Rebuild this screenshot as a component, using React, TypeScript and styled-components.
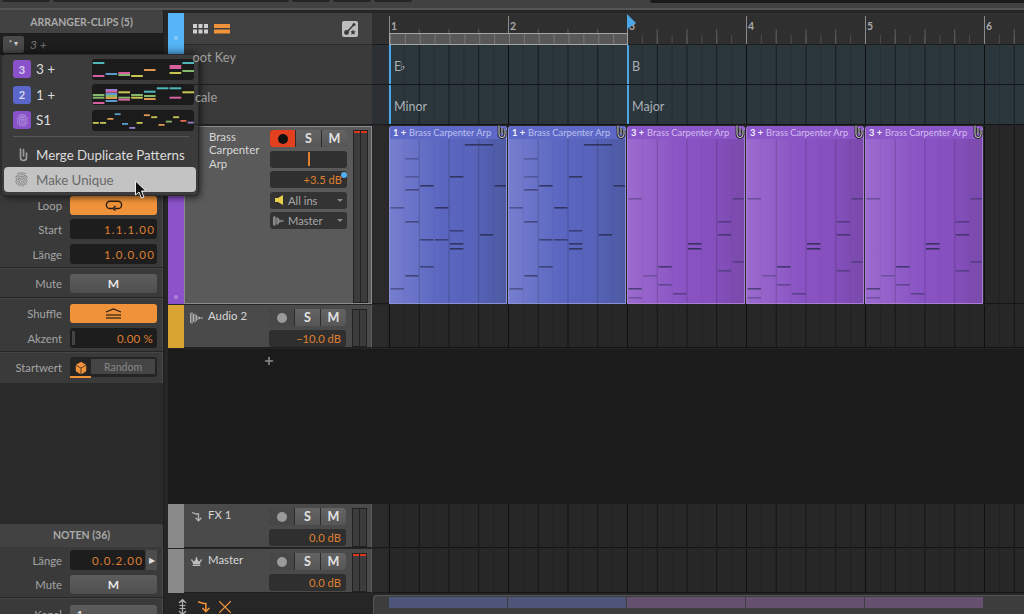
import React from 'react';
import styled, { createGlobalStyle } from 'styled-components';
import { FaCrown, FaDiceD6 } from 'react-icons/fa';
import { MdFingerprint } from 'react-icons/md';
import { Plus, X } from 'lucide-react';

const GlobalStyle = createGlobalStyle`
    html, body {
        margin: 0;
        padding: 0;
        background: #262626;
    }
    * {
        box-sizing: border-box;
    }
`;

const ORANGE = '#f0923a';
const VALUE = '#df7f30';
const BAR = 119;
const STEP = BAR / 8;

/* ---------- data ---------- */

type Note = [number, number, number, number?];

const blueNotes: Note[] = [
    [5, 2, 18], [1, 1, 32, 0.45], [1, 1, 50, 0.45], [2, 1, 59], [4, 1, 50], [7, 1, 59], [1, 1, 63, 0.7],
    [0, 1, 81, 0.6], [3, 1, 81], [1, 1, 95, 0.7], [4, 1, 104, 0.8], [6, 1, 108], [2, 1, 113, 0.8],
    [3, 1, 113, 0.8], [4, 1, 117], [4, 1, 122], [2, 1, 140, 0.8], [1, 1, 149, 0.8], [0, 1, 162, 0.6],
];

const purpleNotes: Note[] = [
    [0, 1, 72, 0.45], [6, 1, 95, 0.6], [6, 1, 108, 0.8], [4, 1, 117], [4, 1, 122], [7, 1, 72, 0.55],
    [7, 1, 135, 0.55], [2, 1, 140, 0.9], [1, 1, 149, 0.4], [2, 1, 158, 0.55], [6, 1, 144, 0.55],
    [3, 1, 167, 0.6], [0, 1, 162, 0.8], [0, 1, 171, 0.45],
];

const C = {
    teal: '#4fb7b8',
    pink: '#d65f9e',
    yellow: '#c8c650',
    green: '#86b86c',
    blue: '#5a9ccb',
    orange: '#dc9850',
    lav: '#9a7fd0',
    red: '#d9694f',
};

type Mini = [number, number, string];

const preview3: Mini[] = [
    [0, 3, C.teal], [0, 16, C.pink], [1, 14, C.blue], [2, 13, C.pink], [2, 15, C.green], [3, 16, C.yellow],
    [4, 10, C.orange], [6, 6, C.pink], [6, 8, C.pink], [6, 13, C.yellow], [7, 3, C.teal], [7, 11, C.green],
];

const preview2: Mini[] = [
    [0, 10, C.green], [0, 12.7, C.green], [0, 18, C.pink], [1, 5, C.lav], [1, 6.7, C.pink], [1, 9, C.blue],
    [1, 11, C.green], [1, 13, C.orange], [1, 16, C.blue], [2, 7.3, C.yellow], [2, 12.7, C.green], [2, 14.7, C.pink],
    [3, 10, C.green], [3, 12.7, C.yellow], [4, 6.7, C.teal], [4, 11, C.green], [4, 14, C.orange], [5, 3.3, C.teal],
    [6, 3.3, C.teal], [6, 12.7, C.pink], [7, 7.3, C.yellow],
];

const preview1: Mini[] = [
    [0, 12, C.yellow], [1, 12, C.yellow], [2, 8, C.orange], [3, 3.3, C.blue], [4, 13, C.blue], [5, 17, C.lav],
    [6, 12, C.yellow], [7, 4.3, C.orange], [8, 6.3, C.yellow], [9, 14, C.orange], [10, 10.7, C.green],
    [11, 6.3, C.yellow], [12, 10, C.red], [13, 11.7, C.lav],
];

/* ---------- page ---------- */

const Page = styled.div`
    position: relative;
    display: flex;
    flex-direction: column;
    width: 1024px;
    height: 614px;
    overflow: hidden;
    background: #262626;
    font-family: Lato, 'Liberation Sans', sans-serif;
    color: #bbb;
`;

const TopStrip = styled.div`
    display: flex;
    justify-content: space-between;
    height: 10px;
    flex: none;
    background: #414141;
    border-bottom: 2px solid #555;
`;

const TopSlots = styled.div`
    display: flex;
    gap: 3px;
    padding-left: 2px;
`;

const TopSlot = styled.div<{ $w: number }>`
    width: ${({ $w }) => $w}px;
    height: 2px;
    background: #262626;
    border-radius: 0 0 2px 2px;
`;

const TopDisplay = styled.div`
    width: 374px;
    height: 3px;
    background: #1b1b1b;
    border-radius: 0 0 0 4px;
`;

const Main = styled.div`
    display: flex;
    flex: 1;
    min-height: 0;
`;

/* ---------- left inspector ---------- */

const Side = styled.aside`
    display: flex;
    flex-direction: column;
    justify-content: space-between;
    width: 164px;
    flex: none;
    background: #2a2a2a;
    border-right: 1px solid #1d1d1d;
`;

const Panel = styled.section<{ $h: number }>`
    display: flex;
    flex-direction: column;
    height: ${({ $h }) => $h}px;
    width: 163px;
    background: #3a3a3a;
    border-radius: 0 4px 0 0;
    box-shadow: inset -1px 0 0 #4a4a4a;
`;

const PanelTitle = styled.h2<{ $lh?: number }>`
    height: 23px;
    margin: 0;
    flex: none;
    font-size: 10.5px;
    font-weight: 700;
    line-height: ${({ $lh = 23 }) => $lh}px;
    text-align: center;
    color: #a9a9a9;
    background: #424242;
    border-radius: 0 4px 0 0;
`;

const ClipPicker = styled.div`
    display: flex;
    align-items: center;
    gap: 6px;
    height: 22px;
    flex: none;
    padding-left: 3px;
    background: #1e1e1e;
    font-size: 12px;
    font-style: italic;
    color: #777;
`;

const PickerButton = styled.div`
    width: 21px;
    height: 17px;
    border-radius: 2px;
    background: #4a4a4a;
    font-size: 8px;
    font-style: normal;
    line-height: 15px;
    text-align: center;
    color: #ccc;
`;

const MenuSlot = styled.div`
    height: 140px;
    flex: none;
`;

const PropRow = styled.div<{ $mt?: number }>`
    display: grid;
    grid-template-columns: 62px 87px;
    column-gap: 8px;
    align-items: center;
    height: 20px;
    flex: none;
    margin-top: ${({ $mt = 5 }) => $mt}px;
`;

const PropLabel = styled.span`
    font-size: 11.3px;
    text-align: right;
    color: #a4a4a4;
`;

const PropButton = styled.div<{ $on?: boolean }>`
    display: flex;
    align-items: center;
    justify-content: center;
    height: 19px;
    border-radius: 3px;
    background: ${({ $on }) => ($on ? ORANGE : 'linear-gradient(#5d5d5d, #4f4f4f)')};
    font-size: 12px;
    font-weight: 700;
    color: #e6e6e6;
`;

const ValueBox = styled.div`
    position: relative;
    height: 20px;
    padding-right: 2px;
    border-radius: 3px;
    background: #1d1d1d;
    font-size: 11.5px;
    line-height: 21px;
    letter-spacing: 1.2px;
    text-align: right;
    color: ${VALUE};
`;

const AccentBox = styled(ValueBox)`
    padding-right: 4px;
    letter-spacing: 0.2px;
`;

const AccentKnob = styled.div`
    position: absolute;
    left: 2px;
    top: 3px;
    width: 3px;
    height: 14px;
    background: #444;
`;

const Split = styled.div<{ $mt?: number }>`
    height: 1px;
    flex: none;
    margin-top: ${({ $mt = 3 }) => $mt}px;
    background: #262626;
    box-shadow: 0 1px 0 #454545;
`;

const SeedBox = styled.div`
    display: flex;
    height: 20px;
    padding: 2px 2px 0 0;
    border-radius: 3px;
    background: #242424;
`;

const SeedDice = styled.div`
    display: flex;
    align-items: center;
    justify-content: center;
    width: 21px;
    height: 19px;
    flex: none;
    color: ${ORANGE};
    border-bottom: 2px solid ${ORANGE};
    font-size: 12px;
`;

const SeedMode = styled.div`
    flex: 1;
    height: 15px;
    background: #454545;
    font-size: 10.5px;
    line-height: 16px;
    text-align: center;
    color: #858585;
`;

const NoteLength = styled.div`
    display: flex;
    gap: 1px;
`;

const ArrowButton = styled.div`
    display: flex;
    align-items: center;
    justify-content: center;
    width: 11px;
    flex: none;
    background: #4c4c4c;
    color: #ddd;
    font-size: 8px;
`;

const LengthValue = styled(ValueBox)`
    flex: 1;
`;

const ChannelBox = styled(PropButton)`
    justify-content: flex-start;
    padding-left: 7px;
    font-size: 10px;
`;

/* ---------- popup menu ---------- */

const Menu = styled.div`
    position: absolute;
    left: 2px;
    top: 55px;
    z-index: 2;
    width: 196px;
    height: 140px;
    padding: 1.5px 2px 2px;
    border-radius: 4px;
    background: #3b3b3b;
    box-shadow: 0 0 0 1px #2a2a2a, 0 -3px 8px rgba(0, 0, 0, 0.45), 2px 3px 6px rgba(0, 0, 0, 0.5);
`;

const ClipItem = styled.div`
    display: grid;
    grid-template-columns: 18px 51px 102px;
    column-gap: 5px;
    align-items: center;
    height: 25.5px;
    padding-left: 9px;
    font-size: 13.6px;
    color: #dcdcdc;
`;

const Badge = styled.div<{ $color: string }>`
    display: flex;
    align-items: center;
    justify-content: center;
    width: 18px;
    height: 18px;
    border-radius: 3px;
    background: ${({ $color }) => $color};
    font-size: 11px;
    font-weight: 700;
    color: #d8d4f0;
`;

const Preview = styled.svg`
    display: block;
    width: 102px;
    height: 21px;
    border-radius: 3px;
    background: #1b1b1b;
`;

const MenuLine = styled.div`
    height: 1px;
    margin: 3px 7px 5px 9px;
    background: #585858;
`;

const ActionItem = styled.div<{ $active?: boolean }>`
    display: flex;
    align-items: center;
    gap: ${({ $active }) => ($active ? 6 : 7)}px;
    height: 25px;
    padding-left: ${({ $active }) => ($active ? 9 : 13)}px;
    border-radius: 4px;
    background: ${({ $active }) => ($active ? '#c3c3c3' : 'transparent')};
    font-size: 13.3px;
    color: ${({ $active }) => ($active ? '#686868' : '#dcdcdc')};
`;

const ActionIcon = styled.span<{ $w: number }>`
    display: flex;
    justify-content: center;
    width: ${({ $w }) => $w}px;
    font-size: 17px;
`;

const Pointer = styled.svg`
    position: absolute;
    left: 134px;
    top: 180px;
    z-index: 4;
`;

/* ---------- arranger ---------- */

const Arranger = styled.div`
    display: flex;
    flex-direction: column;
    flex: 1;
    min-width: 0;
    margin-left: 4px;
    padding-top: 3px;
`;

const Row = styled.div<{ $h: number; $mb?: number }>`
    display: flex;
    height: ${({ $h }) => $h}px;
    flex: none;
    margin-bottom: ${({ $mb = 0 }) => $mb}px;
`;

const Strip = styled.div<{ $color: string }>`
    position: relative;
    width: 16px;
    flex: none;
    background: ${({ $color }) => $color};
`;

const StripDot = styled.div`
    position: absolute;
    left: 6px;
    bottom: 5px;
    width: 4px;
    height: 4px;
    border-radius: 50%;
    background: rgba(255, 255, 255, 0.3);
`;

const Head = styled.div<{ $bg?: string }>`
    display: flex;
    align-items: flex-start;
    width: 188px;
    flex: none;
    background: ${({ $bg = '#4a4a4a' }) => $bg};
    border-bottom: 1px solid #1e1e1e;
`;

const RulerHead = styled(Head)`
    align-items: center;
    padding: 0 14px 0 9px;
    gap: 6px;
    background: #414141;
    border-bottom-color: #2a2a2a;
`;

const ViewSpacer = styled.div`
    flex: 1;
`;

const AutoButton = styled.div`
    display: flex;
    align-items: center;
    justify-content: center;
    width: 16px;
    height: 16px;
    border-radius: 2px;
    background: #bdbdbd;
`;

const LaneHead = styled(Head)`
    position: relative;
    z-index: 3;
    padding: 4px 0 0 1px;
    background: transparent;
    font-size: 12.8px;
    color: #a0a0a0;
`;

const LaneHeadBack = styled.div`
    display: flex;
    width: 188px;
    flex: none;
    background: #3a3a3a;
`;

const CutLabel = styled.span<{ $cut: number; $ml?: number }>`
    margin-left: ${({ $ml = 0 }) => $ml}px;
    clip-path: inset(0 0 0 ${({ $cut }) => $cut}px);
`;

const SelectedHead = styled(Head)`
    background: #5a5a5a;
    border: 1px solid #8b8b8b;
    padding: 3px 3px 0 0;
`;

const PlainHead = styled(Head)`
    padding: 4px 4px 0 0;
    border-right: 1px solid #5a5a5a;
`;

const TrackIcon = styled.div`
    display: flex;
    justify-content: center;
    width: 24px;
    padding-top: 3px;
    flex: none;
    color: #bdbdbd;
`;

const TrackName = styled.div`
    flex: 1;
    font-size: 11.4px;
    line-height: 13.3px;
    color: #d6d6d6;
`;

const Controls = styled.div`
    display: flex;
    flex-direction: column;
    gap: 3.5px;
    width: 77px;
    flex: none;
`;

const ButtonGroup = styled.div`
    display: grid;
    grid-template-columns: 25px 1fr 1fr;
    height: 17px;
    border-radius: 3px;
    overflow: hidden;
    gap: 1px;
    background: #2c2c2c;
`;

const TrackButton = styled.div<{ $bg?: string }>`
    display: flex;
    align-items: center;
    justify-content: center;
    background: ${({ $bg = 'linear-gradient(#646464, #565656)' }) => $bg};
    font-size: 12.5px;
    font-weight: 700;
    color: #e2e2e2;
`;

const RecDot = styled.span<{ $armed?: boolean }>`
    width: 10px;
    height: 10px;
    border-radius: 50%;
    background: ${({ $armed }) => ($armed ? '#111' : '#9a9a9a')};
`;

const Fader = styled.div`
    display: flex;
    justify-content: center;
    align-items: center;
    height: 17px;
    border-radius: 3px;
    background: #303030;
`;

const FaderMark = styled.span`
    width: 2px;
    height: 14px;
    background: ${VALUE};
`;

const DbBox = styled.div`
    position: relative;
    height: 17px;
    padding-right: 5px;
    border-radius: 3px;
    background: #2f2f2f;
    font-size: 11.2px;
    line-height: 18px;
    text-align: right;
    color: ${VALUE};
`;

const BlueDot = styled.span`
    position: absolute;
    right: 0;
    top: 1px;
    width: 6px;
    height: 6px;
    border-radius: 50%;
    background: #55aef0;
`;

const RouteBox = styled.div`
    display: flex;
    align-items: center;
    gap: 4px;
    height: 17px;
    padding: 0 4px 0 3px;
    border-radius: 3px;
    background: #333;
    font-size: 11.2px;
    color: #a8a8a8;
`;

const RouteIcon = styled.span`
    display: flex;
    justify-content: center;
    width: 11px;
    flex: none;
`;

const RouteText = styled.span`
    flex: 1;
`;

const Caret = styled.span`
    width: 0;
    height: 0;
    border-left: 3px solid transparent;
    border-right: 3px solid transparent;
    border-top: 3px solid #8a8a8a;
`;

const Meter = styled.div<{ $h: number }>`
    position: relative;
    display: flex;
    gap: 1px;
    width: 15px;
    height: ${({ $h }) => $h}px;
    margin-left: 6px;
    flex: none;
    background: #222;
    border: 1px solid #222;
`;

const MeterSide = styled.div<{ $clip?: boolean }>`
    flex: 1;
    background: #3c3c3c;
    border-top: 2px solid ${({ $clip }) => ($clip ? '#e0341c' : '#3c3c3c')};
`;

const Gutter = styled.div<{ $bg?: string }>`
    width: 16px;
    flex: none;
    background: ${({ $bg = '#2a2a2a' }) => $bg};
    border-bottom: 1px solid #1a1a1a;
`;

const Lane = styled.div<{ $bg?: string }>`
    position: relative;
    flex: 1;
    min-width: 0;
    background-color: ${({ $bg = '#272727' }) => $bg};
    background-image:
        linear-gradient(90deg, transparent 1px, #0f0f0f 1px, #0f0f0f 2px, transparent 2px),
        linear-gradient(90deg, transparent 1px, rgba(0, 0, 0, 0.38) 1px, rgba(0, 0, 0, 0.38) 2px, transparent 2px),
        linear-gradient(90deg, transparent 1px, rgba(0, 0, 0, 0.14) 1px, rgba(0, 0, 0, 0.14) 2px, transparent 2px);
    background-size: ${BAR}px 100%, ${BAR / 4}px 100%, ${BAR / 8}px 100%;
    border-bottom: 1px solid #141414;
`;

const KeyLane = styled(Lane)`
    display: flex;
    padding-left: 1px;
`;

const KeyBlock = styled.div<{ $w: number }>`
    display: flex;
    align-items: center;
    width: ${({ $w }) => $w}px;
    flex: none;
    padding: 3px 0 0 3px;
    border-left: 2px solid #4ba6e6;
    font-size: 12.5px;
    color: #a9afb3;
`;

const Flat = styled.span`
    margin-left: -1px;
    font-size: 11px;
    color: #c4c8ca;
`;

const RulerLane = styled.div`
    position: relative;
    display: flex;
    flex-direction: column;
    flex: 1;
    min-width: 0;
    background-color: #2f2f2f;
    background-image:
        linear-gradient(90deg, transparent 1px, #8c8c8c 1px, #8c8c8c 2px, transparent 2px),
        linear-gradient(90deg, transparent 1px, #5c5c5c 1px, #5c5c5c 2px, transparent 2px),
        linear-gradient(90deg, transparent 1px, #4b4b4b 1px, #4b4b4b 2px, transparent 2px);
    background-size: ${BAR}px 28px, ${BAR / 4}px 15px, ${BAR / 8}px 9px;
    background-position: 0 bottom;
    background-repeat: repeat-x;
    border-bottom: 1px solid #1d1d1d;
`;

const BarNumbers = styled.div`
    display: flex;
    height: 20px;
    padding-top: 7px;
    flex: none;
`;

const BarNumber = styled.span`
    width: ${BAR}px;
    flex: none;
    padding-left: 3px;
    font-size: 10.5px;
    font-weight: 700;
    color: #a8a8a8;
`;

const LoopRange = styled.div`
    width: 239px;
    height: 12px;
    margin-left: 1px;
    flex: none;
    background-color: #585858;
    background-image: linear-gradient(90deg, #777 1px, transparent 1px);
    background-size: ${STEP}px 100%;
    border: 1px solid #a5a5a5;
`;

const PlayMarker = styled.svg`
    position: absolute;
    left: 238px;
    top: 1px;
`;

const Clip = styled.div<{ $bar: number; $tone: 'blue' | 'purple' }>`
    position: absolute;
    left: ${({ $bar }) => $bar * BAR + 1}px;
    top: 0;
    bottom: -1px;
    display: flex;
    flex-direction: column;
    width: ${BAR - 1}px;
    border-radius: 3px 3px 0 0;
    border: 1px solid ${({ $tone }) => ($tone === 'blue' ? '#8b90d6' : '#a67fd4')};
    border-top: 0;
    background: ${({ $tone }) => ($tone === 'blue' ? '#5e68c6' : '#8a56c8')};
`;

const ClipTitle = styled.div<{ $tone: 'blue' | 'purple' }>`
    display: flex;
    gap: 3px;
    height: 13px;
    flex: none;
    padding-left: 3px;
    font-size: 9.3px;
    line-height: 13px;
    white-space: nowrap;
    color: ${({ $tone }) => ($tone === 'blue' ? '#bcc2f0' : '#d5bdf0')};
`;

const ClipIndex = styled.b`
    color: #f1eefc;
`;

const ClipBody = styled.svg<{ $tone: 'blue' | 'purple' }>`
    display: block;
    flex: 1;
    width: 100%;
    min-height: 0;
    background-color: transparent;
    background-image:
        linear-gradient(90deg, rgba(0, 0, 0, 0.14) 1px, transparent 1px),
        linear-gradient(90deg, rgba(0, 0, 0, 0.05) 1px, transparent 1px),
        ${({ $tone }) =>
            $tone === 'blue'
                ? 'linear-gradient(90deg, #767ecf, #5a66c0 45%, #5864bb 70%, #4d5aa2)'
                : 'linear-gradient(90deg, #9b6bce, #8a54c4 45%, #8750c0 70%, #7a4aab)'};
    background-size: ${BAR / 4}px 100%, ${BAR / 8}px 100%, 100% 100%;
    background-position: ${BAR / 4 - 1}px 0, ${BAR / 8 - 1}px 0, 0 0;
`;

const ClipMark = styled.svg`
    position: absolute;
    right: -1px;
    top: -1px;
`;

const EmptySpace = styled.div`
    display: flex;
    align-items: flex-start;
    height: 155px;
    flex: none;
    padding: 6px 0 0 95px;
    background: #1b1b1b;
    color: #8e8e8e;
`;

const Footer = styled.div`
    display: flex;
    flex: 1;
    min-height: 0;
    margin-top: 1px;
`;

const FooterTools = styled.div`
    display: flex;
    align-items: center;
    gap: 9px;
    width: 205px;
    padding: 4px 0 0 9px;
    flex: none;
    color: ${ORANGE};
`;

const FooterClose = styled(X)`
    margin-left: -5px;
`;

const Overview = styled.div`
    display: flex;
    flex: 1;
    gap: 1px;
    padding: 2px 0 0 16px;
    border-radius: 4px 0 0 0;
    background: #3d3d3d;
    box-shadow: inset 1px 1px 0 #555;
`;

const OverviewClip = styled.div<{ $color: string }>`
    width: ${BAR - 1}px;
    height: 11px;
    flex: none;
    background: ${({ $color }) => $color};
`;

/* ---------- small drawings ---------- */

const Notes: React.FC<{ notes: Note[] }> = ({ notes }) => (
    <>
        {notes.map(([col, len, y, alpha = 1], i) => (
            <rect
                key={i}
                x={col * STEP + 0.5}
                y={y - 13}
                width={len * STEP - 1.5}
                height={1.6}
                fill="#2c2c55"
                opacity={alpha * 0.85}
            />
        ))}
    </>
);

const MiniNotes: React.FC<{ notes: Mini[]; step: number; width: number; height: number }> = ({
    notes,
    step,
    width,
    height,
}) => (
    <Preview viewBox="0 0 102 21">
        {notes.map(([col, y, color], i) => (
            <rect key={i} x={col * step + 0.8} y={y} width={width} height={height} fill={color} />
        ))}
    </Preview>
);

const ClipBadgeIcon = () => {
    const d = 'M2 1 V9.5 a3 3 0 0 0 6 0 V5 M5 3 V8.5';
    return (
        <ClipMark width={10} height={14} viewBox="0 0 10 14" fill="none">
            <path d={d} stroke="#1c1c1c" strokeWidth="2.8" />
            <path d={d} stroke="#dcdcdc" strokeWidth="1" strokeLinecap="round" />
        </ClipMark>
    );
};

const MergeIcon = () => (
    <svg width="11" height="15" viewBox="0 0 11 15" fill="none">
        <path d="M2.5 2 V10.5 a3 3 0 0 0 6 0 V6 M5.5 2.5 V9" stroke="#9a9a9a" strokeWidth="1.7" strokeLinecap="round" />
    </svg>
);

const LoopIcon = () => (
    <svg width="18" height="12" viewBox="0 0 18 12" fill="none" stroke="#2a2015" strokeWidth="1.4">
        <path d="M7.5 9.5 H5 a3.6 3.6 0 0 1 0 -7.2 H13 a3.6 3.6 0 0 1 0 7.2 H9.5" />
        <path d="M10.5 7 L8 9.5 L10.5 11.6" />
    </svg>
);

const ShuffleIcon = () => (
    <svg width="17" height="11" viewBox="0 0 17 11" fill="none" stroke="#2a2015" strokeWidth="1.2">
        <path d="M1 4 L8.5 1 L16 4" />
        <path d="M1 7 H16" />
        <path d="M1 10 H16" />
    </svg>
);

const WaveIcon = () => (
    <svg width="13" height="12" viewBox="0 0 13 12" fill="none" stroke="#c4c4c4" strokeWidth="0.8">
        <path d="M0.5 1 V11 M2 0 V12 M3.5 2 V10 M5 1.5 V10.5 M6.5 3 V9 M8 4 V8 M9.5 5 V7 M9 6 H13" />
    </svg>
);

const ReturnIcon: React.FC<{ color?: string; size?: number }> = ({ color = '#b5b5b5', size = 11 }) => (
    <svg width={size} height={size} viewBox="0 0 11 11" fill="none" stroke={color} strokeWidth="1.3">
        <path d="M1 1.5 L5.5 3 H7.5 V9.5" />
        <path d="M4.6 6.8 L7.5 9.8 L10.4 6.8" />
    </svg>
);

const UpDownIcon = () => (
    <svg width="11" height="18" viewBox="0 0 11 18" fill="none" stroke="#b0b0b0" strokeWidth="1.2">
        <path d="M2 5 L5.5 1.5 L9 5 M2 13 L5.5 16.5 L9 13 M5.5 2 V16 M2.5 7.5 H8.5 M2.5 10.5 H8.5" />
    </svg>
);

const AutoIcon = () => (
    <svg width="14" height="14" viewBox="0 0 14 14">
        <path d="M3.5 10.5 L11 2.5" stroke="#3a3a3a" strokeWidth="1.6" fill="none" />
        <circle cx="3.5" cy="10.5" r="2.4" fill="#3a3a3a" />
        <circle cx="11" cy="2.5" r="1.6" fill="#3a3a3a" />
        <path d="M10 7.5 L10.8 9.3 L12.8 9.5 L11.3 10.8 L11.8 12.8 L10 11.7 L8.2 12.8 L8.7 10.8 L7.2 9.5 L9.2 9.3 Z" fill="#3a3a3a" />
    </svg>
);

const GridViewIcon = () => (
    <svg width="15" height="10" viewBox="0 0 15 10" fill="#cfcfcf">
        {[0, 5.5, 11].map((x) => (
            <React.Fragment key={x}>
                <rect x={x} width="4" height="4" />
                <rect x={x} y="5.5" width="4" height="4" />
            </React.Fragment>
        ))}
    </svg>
);

const ListViewIcon = () => (
    <svg width="16" height="10" viewBox="0 0 16 10" fill={ORANGE}>
        <rect width="16" height="4" />
        <rect y="5.5" width="16" height="4" />
    </svg>
);

const SpeakerIcon = () => (
    <svg width="8" height="10" viewBox="0 0 8 10" fill="#e8cf4a">
        <path d="M0 3 H3 L8 0 V10 L3 7 H0 Z" />
    </svg>
);

const MeterBars: React.FC<{ h: number; clip?: boolean }> = ({ h, clip }) => (
    <Meter $h={h}>
        <MeterSide $clip={clip} />
        <MeterSide $clip={clip} />
    </Meter>
);

const MixerButtons: React.FC<{ armed?: boolean }> = ({ armed }) => (
    <ButtonGroup>
        <TrackButton $bg={armed ? '#e2401f' : '#474747'}>
            <RecDot $armed={armed} />
        </TrackButton>
        <TrackButton>S</TrackButton>
        <TrackButton>M</TrackButton>
    </ButtonGroup>
);

const SmallTrack: React.FC<{
    icon: React.ReactNode;
    name: string;
    db: string;
    color: string;
    clip?: boolean;
    h?: number;
}> = ({ icon, name, db, color, clip, h = 44 }) => (
    <Row $h={h} $mb={1}>
        <Strip $color={color} />
        <PlainHead>
            <TrackIcon>{icon}</TrackIcon>
            <TrackName>{name}</TrackName>
            <Controls>
                <MixerButtons />
                <DbBox>{db}</DbBox>
            </Controls>
            <MeterBars h={h - 5} clip={clip} />
        </PlainHead>
        <Gutter />
        <Lane />
    </Row>
);

const barClips = [
    { bar: 0, tone: 'blue' as const, index: '1 +', notes: blueNotes },
    { bar: 1, tone: 'blue' as const, index: '1 +', notes: blueNotes },
    { bar: 2, tone: 'purple' as const, index: '3 +', notes: purpleNotes },
    { bar: 3, tone: 'purple' as const, index: '3 +', notes: purpleNotes },
    { bar: 4, tone: 'purple' as const, index: '3 +', notes: purpleNotes },
];

export default function App() {
    return (
        <Page>
            <GlobalStyle />
            <TopStrip>
                <TopSlots>
                    <TopSlot $w={48} />
                    <TopSlot $w={236} />
                    <TopSlot $w={38} />
                    <TopSlot $w={38} />
                    <TopSlot $w={38} />
                </TopSlots>
                <TopDisplay />
            </TopStrip>
            <Main>
                <Side>
                    <Panel $h={373}>
                        <PanelTitle $lh={25}>ARRANGER-CLIPS (5)</PanelTitle>
                        <ClipPicker>
                            <PickerButton>* ▾</PickerButton>
                            3 +
                        </ClipPicker>
                        <MenuSlot />
                        <PropRow $mt={0}>
                            <PropLabel>Loop</PropLabel>
                            <PropButton $on>
                                <LoopIcon />
                            </PropButton>
                        </PropRow>
                        <PropRow $mt={4}>
                            <PropLabel>Start</PropLabel>
                            <ValueBox>1.1.1.00</ValueBox>
                        </PropRow>
                        <PropRow>
                            <PropLabel>Länge</PropLabel>
                            <ValueBox>1.0.0.00</ValueBox>
                        </PropRow>
                        <Split />
                        <PropRow>
                            <PropLabel>Mute</PropLabel>
                            <PropButton>M</PropButton>
                        </PropRow>
                        <Split $mt={4} />
                        <PropRow>
                            <PropLabel>Shuffle</PropLabel>
                            <PropButton $on>
                                <ShuffleIcon />
                            </PropButton>
                        </PropRow>
                        <PropRow>
                            <PropLabel>Akzent</PropLabel>
                            <AccentBox>
                                <AccentKnob />
                                0.00 %
                            </AccentBox>
                        </PropRow>
                        <Split />
                        <PropRow>
                            <PropLabel>Startwert</PropLabel>
                            <SeedBox>
                                <SeedDice>
                                    <FaDiceD6 />
                                </SeedDice>
                                <SeedMode>Random</SeedMode>
                            </SeedBox>
                        </PropRow>
                    </Panel>
                    <Panel $h={90}>
                        <PanelTitle>NOTEN (36)</PanelTitle>
                        <PropRow $mt={3}>
                            <PropLabel>Länge</PropLabel>
                            <NoteLength>
                                <LengthValue>0.0.2.00</LengthValue>
                                <ArrowButton>▶</ArrowButton>
                            </NoteLength>
                        </PropRow>
                        <PropRow $mt={4}>
                            <PropLabel>Mute</PropLabel>
                            <PropButton>M</PropButton>
                        </PropRow>
                        <Split $mt={3} />
                        <PropRow $mt={6}>
                            <PropLabel>Kanal</PropLabel>
                            <ChannelBox>1</ChannelBox>
                        </PropRow>
                    </Panel>
                </Side>
                <Arranger>
                    <Row $h={32}>
                        <Strip $color="#56b5f6">
                            <StripDot />
                        </Strip>
                        <RulerHead>
                            <GridViewIcon />
                            <ListViewIcon />
                            <ViewSpacer />
                            <AutoButton>
                                <AutoIcon />
                            </AutoButton>
                        </RulerHead>
                        <Gutter $bg="#303030" />
                        <RulerLane>
                            <BarNumbers>
                                {[1, 2, 3, 4, 5, 6].map((n) => (
                                    <BarNumber key={n}>{n}</BarNumber>
                                ))}
                            </BarNumbers>
                            <LoopRange />
                            <PlayMarker width="12" height="16" viewBox="0 0 12 16">
                                <path d="M1 0 L10 9 L1 15 Z" fill="#4ba6e6" />
                            </PlayMarker>
                        </RulerLane>
                    </Row>
                    <Row $h={40}>
                        <Strip $color="#56b5f6" />
                        <LaneHeadBack>
                            <LaneHead>
                                <CutLabel $cut={8}>Root Key</CutLabel>
                            </LaneHead>
                        </LaneHeadBack>
                        <Gutter $bg="#2c3034" />
                        <KeyLane $bg="#2c363d">
                            <KeyBlock $w={238}>
                                E<Flat>♭</Flat>
                            </KeyBlock>
                            <KeyBlock $w={238}>B</KeyBlock>
                        </KeyLane>
                    </Row>
                    <Row $h={40} $mb={1}>
                        <Strip $color="#56b5f6" />
                        <LaneHeadBack>
                            <LaneHead>
                                <CutLabel $cut={7} $ml={3}>Scale</CutLabel>
                            </LaneHead>
                        </LaneHeadBack>
                        <Gutter $bg="#2c3034" />
                        <KeyLane $bg="#2c363d">
                            <KeyBlock $w={238}>Minor</KeyBlock>
                            <KeyBlock $w={238}>Major</KeyBlock>
                        </KeyLane>
                    </Row>
                    <Row $h={178} $mb={1}>
                        <Strip $color="#8b52c9">
                            <StripDot />
                        </Strip>
                        <SelectedHead>
                            <TrackIcon />
                            <TrackName>
                                Brass
                                <br />
                                Carpenter
                                <br />
                                Arp
                            </TrackName>
                            <Controls>
                                <MixerButtons armed />
                                <Fader>
                                    <FaderMark />
                                </Fader>
                                <DbBox>
                                    +3.5 dB
                                    <BlueDot />
                                </DbBox>
                                <RouteBox>
                                    <RouteIcon>
                                        <SpeakerIcon />
                                    </RouteIcon>
                                    <RouteText>All ins</RouteText>
                                    <Caret />
                                </RouteBox>
                                <RouteBox>
                                    <RouteIcon>
                                        <WaveIcon />
                                    </RouteIcon>
                                    <RouteText>Master</RouteText>
                                    <Caret />
                                </RouteBox>
                            </Controls>
                            <MeterBars h={173} clip />
                        </SelectedHead>
                        <Gutter />
                        <Lane>
                            {barClips.map((clip) => (
                                <Clip key={clip.bar} $bar={clip.bar} $tone={clip.tone}>
                                    <ClipTitle $tone={clip.tone}>
                                        <ClipIndex>{clip.index}</ClipIndex>
                                        Brass Carpenter Arp
                                    </ClipTitle>
                                    <ClipBody $tone={clip.tone}>
                                        <Notes notes={clip.notes} />
                                    </ClipBody>
                                    <ClipBadgeIcon />
                                </Clip>
                            ))}
                        </Lane>
                    </Row>
                    <SmallTrack icon={<WaveIcon />} name="Audio 2" db="−10.0 dB" color="#d9a431" h={43} />
                    <EmptySpace>
                        <Plus size={12} strokeWidth={3} />
                    </EmptySpace>
                    <SmallTrack icon={<ReturnIcon />} name="FX 1" db="0.0 dB" color="#8a8a8a" />
                    <SmallTrack icon={<FaCrown size={11} />} name="Master" db="0.0 dB" color="#8a8a8a" clip />
                    <Footer>
                        <FooterTools>
                            <UpDownIcon />
                            <ReturnIcon color={ORANGE} size={13} />
                            <FooterClose size={22} strokeWidth={1.2} />
                        </FooterTools>
                        <Overview>
                            <OverviewClip $color="#4e5578" />
                            <OverviewClip $color="#4e5578" />
                            <OverviewClip $color="#65506f" />
                            <OverviewClip $color="#65506f" />
                            <OverviewClip $color="#65506f" />
                        </Overview>
                    </Footer>
                </Arranger>
            </Main>

            <Menu>
                <ClipItem>
                    <Badge $color="#8a52c8">3</Badge>
                    3 +
                    <MiniNotes notes={preview3} step={12.8} width={11.6} height={2} />
                </ClipItem>
                <ClipItem>
                    <Badge $color="#5a67c8">2</Badge>
                    1 +
                    <MiniNotes notes={preview2} step={12.8} width={11.6} height={2} />
                </ClipItem>
                <ClipItem>
                    <Badge $color="#8a52c8">
                        <MdFingerprint size={15} color="#b79be0" />
                    </Badge>
                    S1
                    <MiniNotes notes={preview1} step={7.3} width={6} height={1.8} />
                </ClipItem>
                <MenuLine />
                <ActionItem>
                    <ActionIcon $w={12}>
                        <MergeIcon />
                    </ActionIcon>
                    Merge Duplicate Patterns
                </ActionItem>
                <ActionItem $active>
                    <ActionIcon $w={17}>
                        <MdFingerprint color="#777" />
                    </ActionIcon>
                    Make Unique
                </ActionItem>
            </Menu>
            <Pointer width="14" height="20" viewBox="0 0 14 20">
                <path d="M1.5 1 V15 L5 12 L7.5 18 L10 17 L7.5 11 H12 Z" fill="#111" stroke="#eee" strokeWidth="1" />
            </Pointer>
        </Page>
    );
}
